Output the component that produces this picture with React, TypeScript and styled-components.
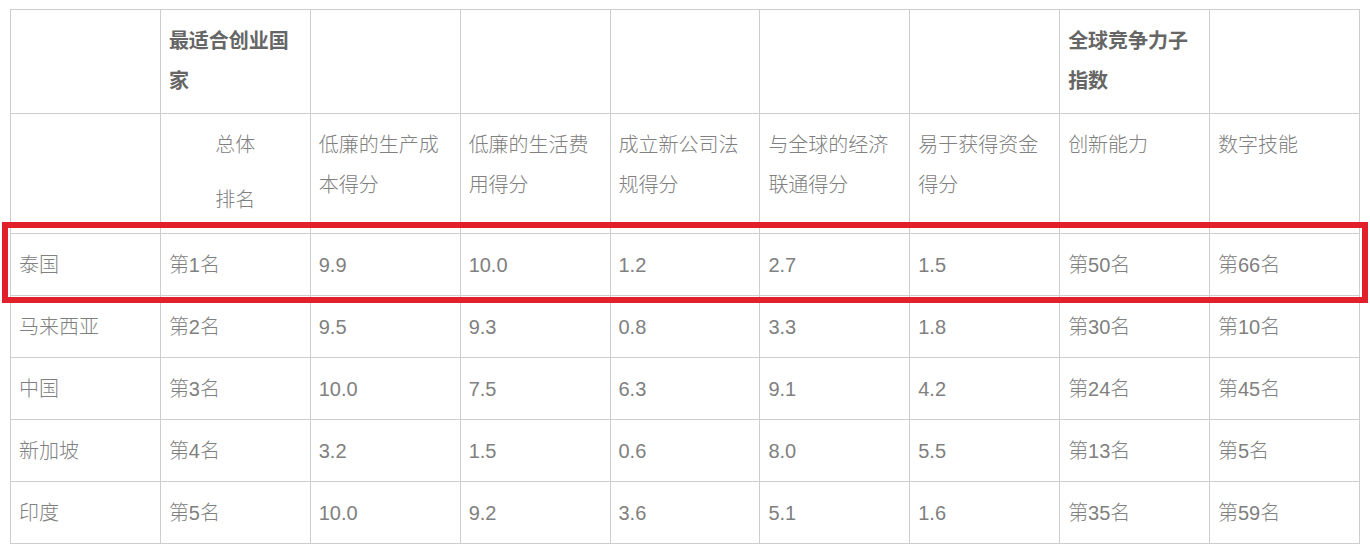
import React from 'react';
import styled, { createGlobalStyle } from 'styled-components';

const GlobalStyle = createGlobalStyle`
  body {
    margin: 0;
    background: #fff;
    font-family: "Liberation Sans", "Noto Sans CJK SC", sans-serif;
  }
`;

// Page + table
const Page = styled.div`
  position: relative;
  padding: 9px 10px;
`;

const Table = styled.table`
  width: 1350px;
  table-layout: fixed;
  border-collapse: collapse;
  font-size: 20px;
  line-height: 40px;
  color: #7f7f7f;
`;

const Row = styled.tr<{ h: number }>`
  height: ${({ h }) => h}px;
`;

const Cell = styled.td<{ bold?: boolean; center?: boolean; top?: boolean }>`
  border: 1px solid #cdcdcd;
  padding: ${({ top }) => (top ? '11px 8px 10px' : '0 8px')};
  vertical-align: ${({ top }) => (top ? 'top' : 'middle')};
  text-align: ${({ center }) => (center ? 'center' : 'left')};
  font-weight: ${({ bold }) => (bold ? 700 : 300)};
  color: ${({ bold }) => (bold ? '#666' : '#808080')};
  word-break: break-all;
`;

const Para = styled.p`
  margin: 0;
  & + & {
    margin-top: 15px;
  }
`;

// Annotation drawn over the first data row
const Highlight = styled.div`
  position: absolute;
  left: 2px;
  top: 222px;
  width: 1366px;
  height: 81px;
  box-sizing: border-box;
  border: 6px solid #e2202b;
  pointer-events: none;
`;

const subHeads = [
  '低廉的生产成本得分',
  '低廉的生活费用得分',
  '成立新公司法规得分',
  '与全球的经济联通得分',
  '易于获得资金得分',
  '创新能力',
  '数字技能',
];

const rows = [
  ['泰国', '第1名', '9.9', '10.0', '1.2', '2.7', '1.5', '第50名', '第66名'],
  ['马来西亚', '第2名', '9.5', '9.3', '0.8', '3.3', '1.8', '第30名', '第10名'],
  ['中国', '第3名', '10.0', '7.5', '6.3', '9.1', '4.2', '第24名', '第45名'],
  ['新加坡', '第4名', '3.2', '1.5', '0.6', '8.0', '5.5', '第13名', '第5名'],
  ['印度', '第5名', '10.0', '9.2', '3.6', '5.1', '1.6', '第35名', '第59名'],
];

const App: React.FC = () => {
  return (
    <Page>
      <GlobalStyle />
      <Table>
        <tbody>
          <Row h={104}>
            <Cell top />
            <Cell top bold>最适合创业国家</Cell>
            <Cell top />
            <Cell top />
            <Cell top />
            <Cell top />
            <Cell top />
            <Cell top bold>全球竞争力子指数</Cell>
            <Cell top />
          </Row>
          <Row h={120}>
            <Cell top />
            <Cell top center>
              <Para>总体</Para>
              <Para>排名</Para>
            </Cell>
            {subHeads.map((h) => (
              <Cell top key={h}>{h}</Cell>
            ))}
          </Row>
          {rows.map((r) => (
            <Row h={62} key={r[0]}>
              {r.map((v, i) => (
                <Cell key={i}>{v}</Cell>
              ))}
            </Row>
          ))}
        </tbody>
      </Table>
      <Highlight />
    </Page>
  );
};

export default App;
